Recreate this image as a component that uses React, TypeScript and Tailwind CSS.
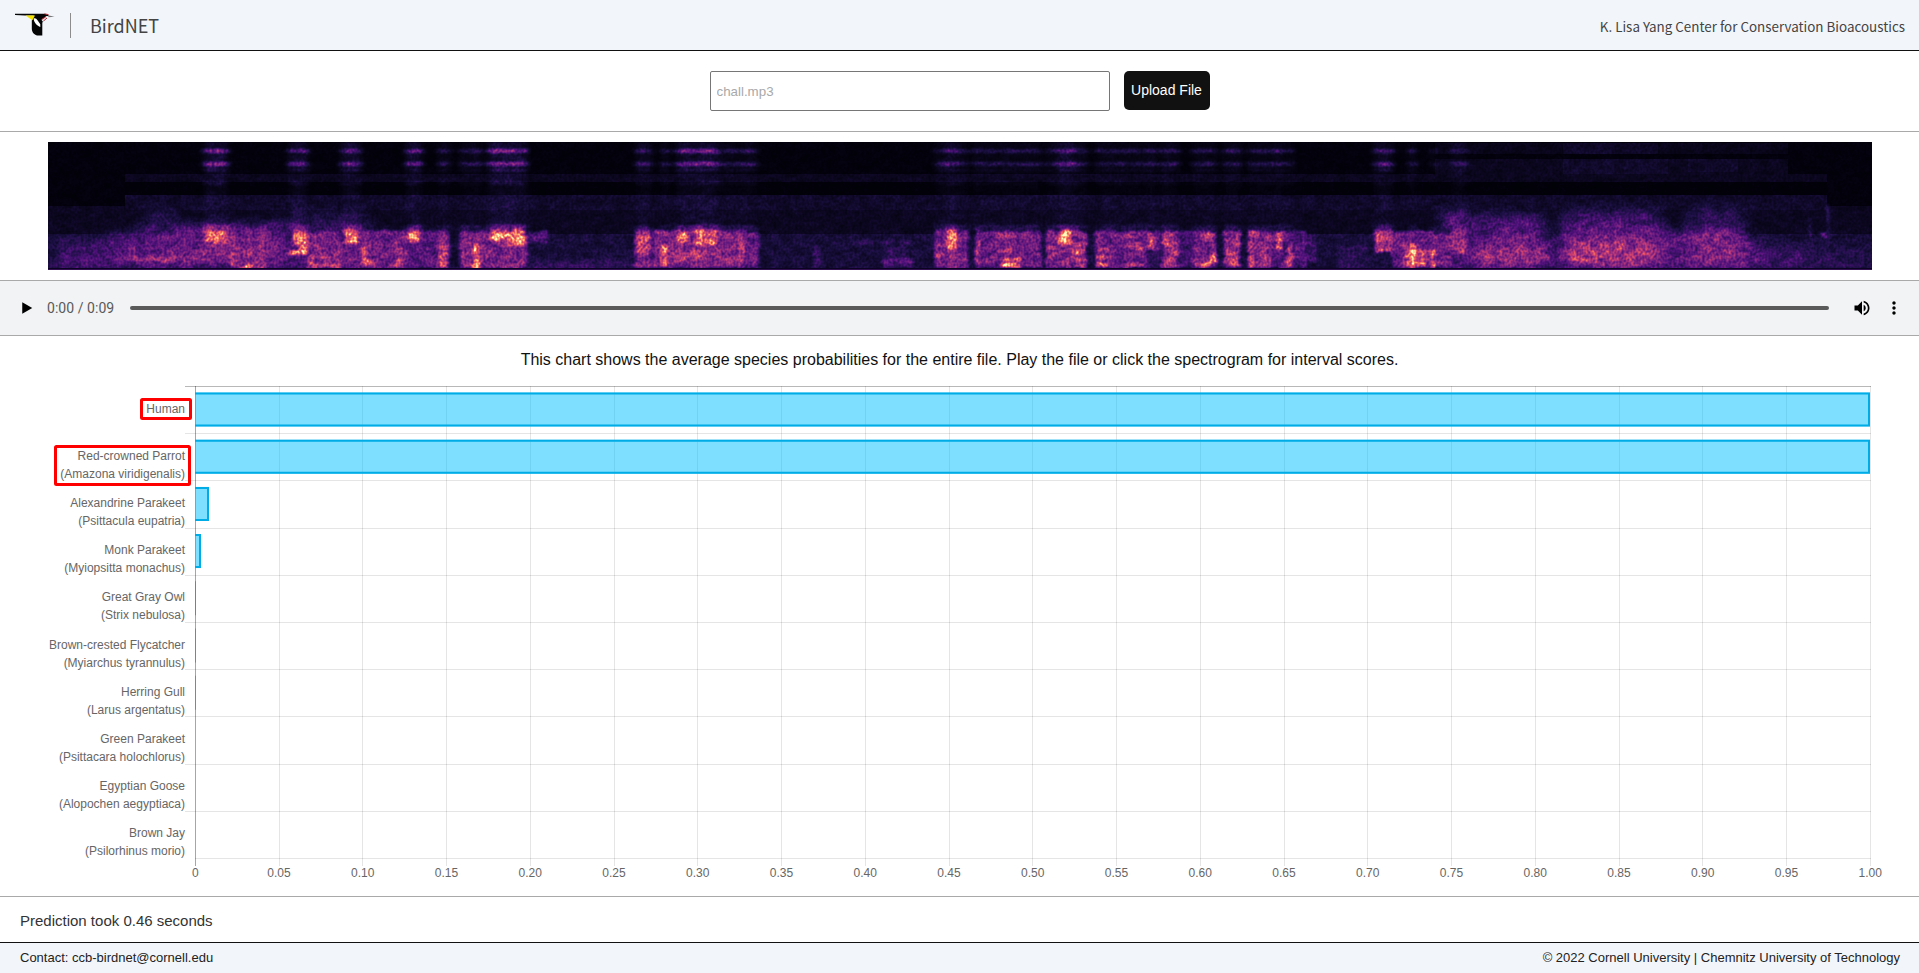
import React from "react";

const species: { name: string; latin?: string; width: number }[] = [
  { name: "Human", width: 1675 },
  { name: "Red-crowned Parrot", latin: "(Amazona viridigenalis)", width: 1675 },
  { name: "Alexandrine Parakeet", latin: "(Psittacula eupatria)", width: 14 },
  { name: "Monk Parakeet", latin: "(Myiopsitta monachus)", width: 6 },
  { name: "Great Gray Owl", latin: "(Strix nebulosa)", width: 1 },
  { name: "Brown-crested Flycatcher", latin: "(Myiarchus tyrannulus)", width: 0.95 },
  { name: "Herring Gull", latin: "(Larus argentatus)", width: 0.85 },
  { name: "Green Parakeet", latin: "(Psittacara holochlorus)", width: 0 },
  { name: "Egyptian Goose", latin: "(Alopochen aegyptiaca)", width: 0 },
  { name: "Brown Jay", latin: "(Psilorhinus morio)", width: 0 },
];

// [x0, x1, y0, y1, level]; later entries paint over earlier ones.
type Patch = [number, number, number, number, number];

const floor: Patch[] = [
  [0, 1824, 0, 128, 0.015],
  [77, 1779, 32, 40, 0.05],
  [77, 1779, 40, 53, 0.01],
  [0, 1824, 64, 92, 0.055],
  [77, 1779, 53, 68, 0.075],
  [1387, 1740, 1, 12, 0.045],
  [1387, 1740, 17, 32, 0.05],
  [1515, 1610, 1, 12, 0.07],
  [1515, 1620, 17, 32, 0.075],
  [1640, 1690, 17, 30, 0.07],
  [0, 1824, 92, 128, 0.1],
];

const haze: Patch[] = [
  [10, 150, 100, 128, 0.22],
  [60, 150, 92, 128, 0.25],
  [92, 240, 82, 128, 0.28],
  [100, 125, 66, 90, 0.14],
  [150, 230, 90, 128, 0.36],
  [80, 150, 108, 125, 0.34],
  [225, 320, 78, 95, 0.19],
  [240, 320, 70, 84, 0.13],
  [240, 480, 92, 128, 0.26],
  [0, 600, 121, 128, 0.24],
  [1395, 1420, 68, 128, 0.26],
  [1425, 1495, 72, 128, 0.22],
  [1448, 1495, 82, 128, 0.28],
  [1515, 1610, 68, 128, 0.21],
  [1515, 1620, 84, 128, 0.3],
  [1425, 1500, 100, 124, 0.42],
  [1515, 1610, 98, 124, 0.46],
  [1610, 1640, 90, 128, 0.26],
  [1641, 1695, 66, 90, 0.17],
  [1641, 1694, 88, 126, 0.37],
  [1694, 1712, 98, 128, 0.27],
  [1712, 1760, 106, 128, 0.2],
  [1760, 1824, 106, 128, 0.15],
];

const voice: Patch[] = [
  [85, 155, 115, 119, 0.45],
  [182, 219, 92, 126, 0.36],
  [185, 216, 102, 126, 0.43],
  [259, 292, 90, 126, 0.37],
  [292, 312, 100, 126, 0.33],
  [312, 359, 89, 126, 0.35],
  [359, 390, 89, 126, 0.28],
  [390, 400, 89, 126, 0.38],
  [402, 411, 84, 126, 0.09],
  [413, 440, 89, 126, 0.38],
  [441, 479, 89, 126, 0.38],
  [480, 500, 89, 101, 0.25],
  [480, 512, 102, 119, 0.11],
  [587, 697, 88, 126, 0.39],
  [696, 711, 90, 126, 0.31],
  [603, 605, 86, 126, 0.16],
  [765, 772, 104, 126, 0.2],
  [805, 862, 98, 102, 0.17],
  [840, 858, 104, 116, 0.18],
  [835, 865, 116, 126, 0.25],
  [887, 920, 88, 126, 0.38],
  [932, 993, 89, 126, 0.34],
  [998, 1039, 89, 126, 0.38],
  [1047, 1112, 89, 126, 0.34],
  [1098, 1112, 108, 126, 0.18],
  [1114, 1130, 89, 126, 0.42],
  [1130, 1145, 89, 126, 0.22],
  [1145, 1168, 89, 126, 0.36],
  [1176, 1192, 89, 126, 0.44],
  [1200, 1225, 89, 126, 0.38],
  [1225, 1258, 89, 126, 0.27],
  [1258, 1268, 92, 120, 0.21],
  [1290, 1320, 104, 126, 0.16],
  [1327, 1344, 88, 110, 0.56],
  [1344, 1387, 89, 126, 0.32],
  [1387, 1404, 92, 124, 0.35],
  [1404, 1419, 88, 112, 0.46],
  [1428, 1500, 114, 118, 0.46],
  [1510, 1612, 114, 118, 0.5],
  [1644, 1690, 115, 118, 0.42],
  [1762, 1763, 76, 118, 0.24],
  [1779, 1781, 62, 118, 0.2],
  [1773, 1778, 90, 96, 0.3],
];

const bright: Patch[] = [
  [160, 176, 85, 90, 0.42],
  [158, 178, 89, 100, 0.74],
  [183, 185, 106, 124, 0.6],
  [196, 206, 123, 126, 0.7],
  [246, 258, 88, 103, 0.66],
  [250, 259, 98, 113, 0.78],
  [242, 250, 108, 113, 0.65],
  [262, 266, 112, 124, 0.55],
  [266, 290, 122, 125, 0.6],
  [272, 292, 115, 118, 0.52],
  [288, 291, 112, 125, 0.55],
  [296, 311, 88, 102, 0.75],
  [314, 318, 104, 122, 0.58],
  [318, 326, 117, 123, 0.62],
  [347, 355, 106, 126, 0.44],
  [349, 354, 117, 126, 0.65],
  [360, 372, 88, 100, 0.74],
  [391, 399, 104, 124, 0.64],
  [425, 431, 102, 127, 0.72],
  [425, 432, 120, 127, 0.9],
  [442, 476, 88, 99, 0.76],
  [458, 478, 95, 103, 0.7],
  [589, 601, 90, 112, 0.55],
  [629, 638, 89, 101, 0.68],
  [648, 668, 88, 102, 0.75],
  [614, 619, 102, 126, 0.66],
  [613, 620, 118, 123, 0.83],
  [624, 665, 108, 119, 0.47],
  [692, 695, 100, 126, 0.64],
  [898, 908, 86, 107, 0.65],
  [888, 895, 102, 105, 0.6],
  [888, 895, 111, 114, 0.55],
  [928, 931, 87, 126, 0.54],
  [950, 980, 92, 95, 0.5],
  [950, 966, 107, 110, 0.58],
  [955, 973, 116, 119, 0.68],
  [952, 973, 121, 125, 0.84],
  [1011, 1024, 88, 101, 0.79],
  [1026, 1038, 93, 96, 0.58],
  [1026, 1038, 101, 104, 0.56],
  [1026, 1038, 108, 111, 0.62],
  [1026, 1038, 116, 119, 0.64],
  [1026, 1038, 123, 126, 0.6],
  [1000, 1008, 104, 108, 0.55],
  [1049, 1060, 106, 109, 0.58],
  [1049, 1060, 114, 117, 0.63],
  [1049, 1060, 121, 125, 0.68],
  [1062, 1094, 93, 95, 0.47],
  [1080, 1095, 104, 107, 0.49],
  [1078, 1092, 122, 125, 0.53],
  [1100, 1106, 90, 106, 0.58],
  [1115, 1121, 90, 105, 0.56],
  [1119, 1130, 109, 112, 0.62],
  [1119, 1130, 116, 119, 0.6],
  [1119, 1130, 122, 125, 0.58],
  [1148, 1168, 92, 95, 0.5],
  [1163, 1168, 109, 120, 0.7],
  [1146, 1164, 120, 124, 0.72],
  [1183, 1190, 101, 104, 0.6],
  [1183, 1190, 109, 112, 0.62],
  [1182, 1190, 117, 123, 0.75],
  [1201, 1205, 88, 126, 0.52],
  [1206, 1222, 92, 95, 0.5],
  [1212, 1220, 112, 124, 0.48],
  [1228, 1234, 90, 107, 0.62],
  [1229, 1234, 102, 107, 0.8],
  [1239, 1244, 104, 126, 0.6],
  [1356, 1370, 104, 126, 0.52],
  [1363, 1367, 102, 127, 0.88],
  [1355, 1364, 120, 123, 0.75],
  [1369, 1387, 108, 122, 0.48],
  [1369, 1377, 120, 124, 0.75],
  [1383, 1387, 106, 125, 0.76],
];

// Harmonic echoes in the upper half: [x0, x1, level]
const echoes: [number, number, number][] = [
  [157, 179, 0.28],
  [242, 259, 0.23],
  [294, 312, 0.24],
  [359, 373, 0.24],
  [391, 401, 0.12],
  [413, 422, 0.12],
  [425, 432, 0.16],
  [441, 478, 0.29],
  [589, 602, 0.17],
  [614, 620, 0.14],
  [629, 646, 0.22],
  [647, 669, 0.27],
  [669, 690, 0.1],
  [692, 708, 0.13],
  [887, 896, 0.09],
  [897, 909, 0.2],
  [909, 920, 0.1],
  [927, 932, 0.15],
  [934, 992, 0.1],
  [998, 1009, 0.09],
  [1010, 1026, 0.24],
  [1026, 1038, 0.12],
  [1048, 1096, 0.09],
  [1098, 1108, 0.13],
  [1113, 1130, 0.12],
  [1145, 1168, 0.1],
  [1177, 1192, 0.12],
  [1201, 1225, 0.1],
  [1227, 1235, 0.14],
  [1239, 1244, 0.11],
  [1327, 1344, 0.19],
  [1362, 1367, 0.14],
  [1384, 1387, 0.11],
  [1404, 1418, 0.11],
];

const gray = (v: number) => {
  const n = Math.round(v * 255);
  return `rgb(${n},${n},${n})`;
};

function Patches({ items, gain = 1 }: { items: Patch[]; gain?: number }) {
  return (
    <>
      {items.map(([x0, x1, y0, y1, v], i) => (
        <rect key={i} x={x0} y={y0} width={x1 - x0} height={y1 - y0} fill={gray(v * gain)} />
      ))}
    </>
  );
}

function Spectrogram() {
  return (
    <svg width="1824" height="128" viewBox="0 0 1824 128" className="block">
      <defs>
        <filter id="soft" x="0" y="0" width="1824" height="128" filterUnits="userSpaceOnUse" colorInterpolationFilters="sRGB">
          <feGaussianBlur stdDeviation="8 5" />
        </filter>
        <filter id="echo" x="0" y="0" width="1824" height="128" filterUnits="userSpaceOnUse" colorInterpolationFilters="sRGB">
          <feGaussianBlur stdDeviation="3 1.1" />
        </filter>
        <filter id="edge" x="0" y="0" width="1824" height="128" filterUnits="userSpaceOnUse" colorInterpolationFilters="sRGB">
          <feTurbulence type="fractalNoise" baseFrequency="0.12 0.18" numOctaves={2} seed={21} result="warp" />
          <feDisplacementMap in="SourceGraphic" in2="warp" scale={5} xChannelSelector="R" yChannelSelector="G" />
          <feGaussianBlur stdDeviation="1.6 1.2" />
        </filter>
        <filter id="heat" x="0" y="0" width="1824" height="128" filterUnits="userSpaceOnUse" colorInterpolationFilters="sRGB">
          <feTurbulence type="fractalNoise" baseFrequency="0.42 0.36" numOctaves={1} seed={4} result="fine" />
          <feColorMatrix in="fine" type="matrix" values="2 0 0 0 -0.5  2 0 0 0 -0.5  2 0 0 0 -0.5  0 0 0 0 1" result="fineGray" />
          <feTurbulence type="fractalNoise" baseFrequency="0.09 0.14" numOctaves={3} seed={9} result="coarse" />
          <feColorMatrix in="coarse" type="matrix" values="2.2 0 0 0 -0.6  2.2 0 0 0 -0.6  2.2 0 0 0 -0.6  0 0 0 0 1" result="coarseGray" />
          <feComposite in="SourceGraphic" in2="fineGray" operator="arithmetic" k1={0.65} k2={0.68} k3={0} k4={0} result="a" />
          <feComposite in="a" in2="coarseGray" operator="arithmetic" k1={0.5} k2={0.74} k3={0} k4={0} result="b" />
          <feComponentTransfer in="b">
            <feFuncR type="table" tableValues="0 .11 .318 .506 .718 .898 .984 .996 .988" />
            <feFuncG type="table" tableValues="0 .063 .07 .145 .216 .314 .533 .76 .992" />
            <feFuncB type="table" tableValues=".016 .267 .486 .506 .475 .392 .38 .53 .749" />
            <feFuncA type="table" tableValues="1 1" />
          </feComponentTransfer>
        </filter>
      </defs>
      <g filter="url(#heat)">
        <Patches items={floor} />
        <g filter="url(#soft)">
          <Patches items={haze} gain={0.97} />
        </g>
        <g filter="url(#echo)">
          {echoes.map(([x0, x1, v], i) => (
            <g key={i}>
              <rect x={x0} y={0} width={x1 - x0} height={86} fill="#fff" opacity={v * 0.13} />
              <rect x={x0} y={0} width={x1 - x0} height={30} fill="#fff" opacity={v * 0.16} />
              <rect x={x0 - 1} y={7} width={x1 - x0 + 2} height={4} fill="#fff" opacity={v} />
              <rect x={x0 - 1} y={20} width={x1 - x0 + 2} height={4} fill="#fff" opacity={v * 1.05} />
              <rect x={x0} y={27} width={x1 - x0} height={2} fill="#fff" opacity={v * 0.3} />
              <rect x={x0} y={39} width={x1 - x0} height={4} fill="#fff" opacity={v * 0.2} />
              <rect x={x0} y={83} width={x1 - x0} height={6} fill="#fff" opacity={v * 0.8} />
            </g>
          ))}
        </g>
        <g filter="url(#edge)">
          <Patches items={voice} gain={0.93} />
          <Patches items={bright} gain={0.97} />
        </g>
      </g>
      <rect y="126" width="1824" height="1" fill="#0a0420" />
      <rect y="127" width="1824" height="1" fill="#32104f" />
    </svg>
  );
}

function Chart() {
  const ticks = Array.from({ length: 21 }, (_, i) => i);
  return (
    <svg width="1919" height="520" viewBox="0 376 1919 520" className="block">
      {ticks.map((i) => (
        <rect key={i} x={Math.round(195 + i * 83.75 - 0.01)} y={386} width={1} height={480} fill="#000" fillOpacity={i === 0 ? 0.35 : 0.1} />
      ))}
      {Array.from({ length: 11 }, (_, i) => (
        <rect
          key={i}
          x={i === 10 ? 195 : 185}
          y={Math.round(386 + i * 47.2)}
          width={i === 10 ? 1676 : 1686}
          height={1}
          fill="#000"
          fillOpacity={i === 0 ? 0.28 : 0.1}
        />
      ))}
      {species.map((s, i) => {
        const top = 392.5 + i * 47.2;
        const right = 195 + s.width;
        if (s.width === 0) return null;
        if (s.width < 2) return <rect key={i} x={195} y={top} width={s.width} height={34} fill="#00ace6" />;
        return (
          <g key={i}>
            <rect x={195} y={top} width={s.width} height={34} fill="#00bfff" fillOpacity={0.5} />
            <path d={`M195 ${top + 1}H${right - 1}V${top + 33}H195`} fill="none" stroke="#00ace6" strokeWidth={2} />
          </g>
        );
      })}
      <g fill="#666" fontSize="12" fontFamily="'Liberation Sans', Arial, sans-serif">
        {species.map((s, i) => {
          const y = Math.round(412.6 + i * 47.2);
          return (
            <g key={i} textAnchor="end">
              <text x={185} y={y}>{s.name}</text>
              {s.latin && <text x={185} y={y + 18}>{s.latin}</text>}
            </g>
          );
        })}
        {ticks.map((i) => (
          <text key={i} x={195.3 + i * 83.75} y={877} textAnchor="middle">
            {i === 0 ? "0" : (i * 0.05).toFixed(2)}
          </text>
        ))}
      </g>
      <g fill="none" stroke="#f00" strokeWidth={3}>
        <rect x={141.5} y={399.5} width={49} height={19} rx={1} />
        <rect x={55.5} y={446.5} width={134} height={38} rx={1} />
      </g>
    </svg>
  );
}

function Logo() {
  return (
    <svg width="40" height="25" viewBox="0 0 40 25" className="block">
      <path d="M0 .8H30L34 2.200 31.500 4 28.500 6.500 27.300 10V22.600H23.500C19.500 22.500 16.800 19.500 16.800 15.500V7.500L18.800 2.600H10L0 2Z" fill="#050505" />
      <path d="M10.500 2.600H20L17.400 7.200Z" fill="#f5e400" />
      <path d="M18.600 5.600C20 4.600 21.500 5.500 22.500 7.200L25.300 11.200V14C22.500 12.800 18.800 10 18.600 5.600Z" fill="#fff" />
      <path d="M26.500 6.800 31.500 3 34.500 3.300 30 5.600 27.500 8.500Z" fill="#e8e8e8" />
      <path d="M27 6.200 31 3.600M29.500 .9 33.500 1.600M28.500 8 32 5" stroke="#b3202c" strokeWidth="1" fill="none" />
      <path d="M33 2.200 39.500 3.800 33.500 4.200Z" fill="#777" />
    </svg>
  );
}

export default function App() {
  return (
    <div className="flex h-[973px] w-full flex-col overflow-hidden bg-white font-['Liberation_Sans',Arial,sans-serif] text-[#333]">
      <header className="flex h-[51px] shrink-0 items-center border-b border-[#111] bg-[#f2f6fb] pl-[15px] pr-[14px] font-['Noto_Sans_CJK_SC',sans-serif] text-[#444]">
        <Logo />
        <div className="ml-[15px] h-[25px] w-px bg-[#8c8c8c]" />
        <h1 className="ml-[19px] text-lg leading-6">BirdNET</h1>
        <div className="ml-auto pt-0.5 text-[13.400px] leading-6">K. Lisa Yang Center for Conservation Bioacoustics</div>
      </header>

      <section className="flex h-[81px] shrink-0 items-start justify-center gap-[14px] border-b border-[#a9a9a9] pt-5">
        <input
          className="h-10 w-[400px] rounded-[2px] border border-[#767676] px-1.5 text-[13.333px] text-[#a9a9a9] placeholder:text-[#a9a9a9]"
          placeholder="chall.mp3"
          readOnly
        />
        <button className="h-[39px] w-[86px] rounded-[5px] bg-[#111] pb-px text-sm text-white">Upload File</button>
      </section>

      <section className="flex h-[149px] shrink-0 justify-center border-b border-[#a9a9a9] pt-[10px]">
        <Spectrogram />
      </section>

      <section className="flex h-[55px] shrink-0 items-center border-b border-[#a9a9a9] bg-[#f1f3f4] pr-[15px] pl-4">
        <svg width="20" height="20" viewBox="0 0 24 24" className="shrink-0">
          <path d="M7.500 5v14l12-7z" fill="#000" />
        </svg>
        <span className="ml-[11px] w-[83px] whitespace-nowrap font-['Roboto',sans-serif] text-sm tracking-[0.05px] text-[#5a5a5a]">0:00 / 0:09</span>
        <div className="h-1 w-[1699px] rounded-full bg-[#5a5a5a]" />
        <svg width="20" height="20" viewBox="0 0 24 24" className="ml-[23px] shrink-0">
          <path
            d="M3 9v6h4l5 5V4L7 9H3zm13.500 3A4.500 4.500 0 0 0 14 7.970v8.050c1.480-.73 2.500-2.250 2.500-4.020zM14 3.230v2.060c2.890.86 5 3.540 5 6.710s-2.110 5.850-5 6.710v2.060c4.010-.91 7-4.490 7-8.770s-2.990-7.860-7-8.770z"
            fill="#000"
          />
        </svg>
        <svg width="20" height="20" viewBox="0 0 24 24" className="ml-[12px] shrink-0">
          <path
            d="M12 8c1.100 0 2-.9 2-2s-.9-2-2-2-2 .9-2 2 .9 2 2 2zm0 2c-1.100 0-2 .9-2 2s.9 2 2 2 2-.9 2-2-.9-2-2-2zm0 6c-1.100 0-2 .9-2 2s.9 2 2 2 2-.9 2-2-.9-2-2-2z"
            fill="#000"
          />
        </svg>
      </section>

      <section className="flex h-[561px] shrink-0 flex-col border-b border-[#a9a9a9]">
        <p className="h-10 pt-3 text-center text-base text-[#111]">
          This chart shows the average species probabilities for the entire file. Play the file or click the spectrogram for interval scores.
        </p>
        <Chart />
      </section>

      <section className="flex h-[45px] shrink-0 items-center px-5 pt-1 text-[15px]">Prediction took 0.46 seconds</section>

      <footer className="flex h-[31px] shrink-0 items-center justify-between border-t border-[#111] bg-[#f2f6fb] pl-5 pr-[19px] text-[13px] text-[#222]">
        <span>Contact: ccb-birdnet@cornell.edu</span>
        <span>© 2022 Cornell University | Chemnitz University of Technology</span>
      </footer>
    </div>
  );
}
